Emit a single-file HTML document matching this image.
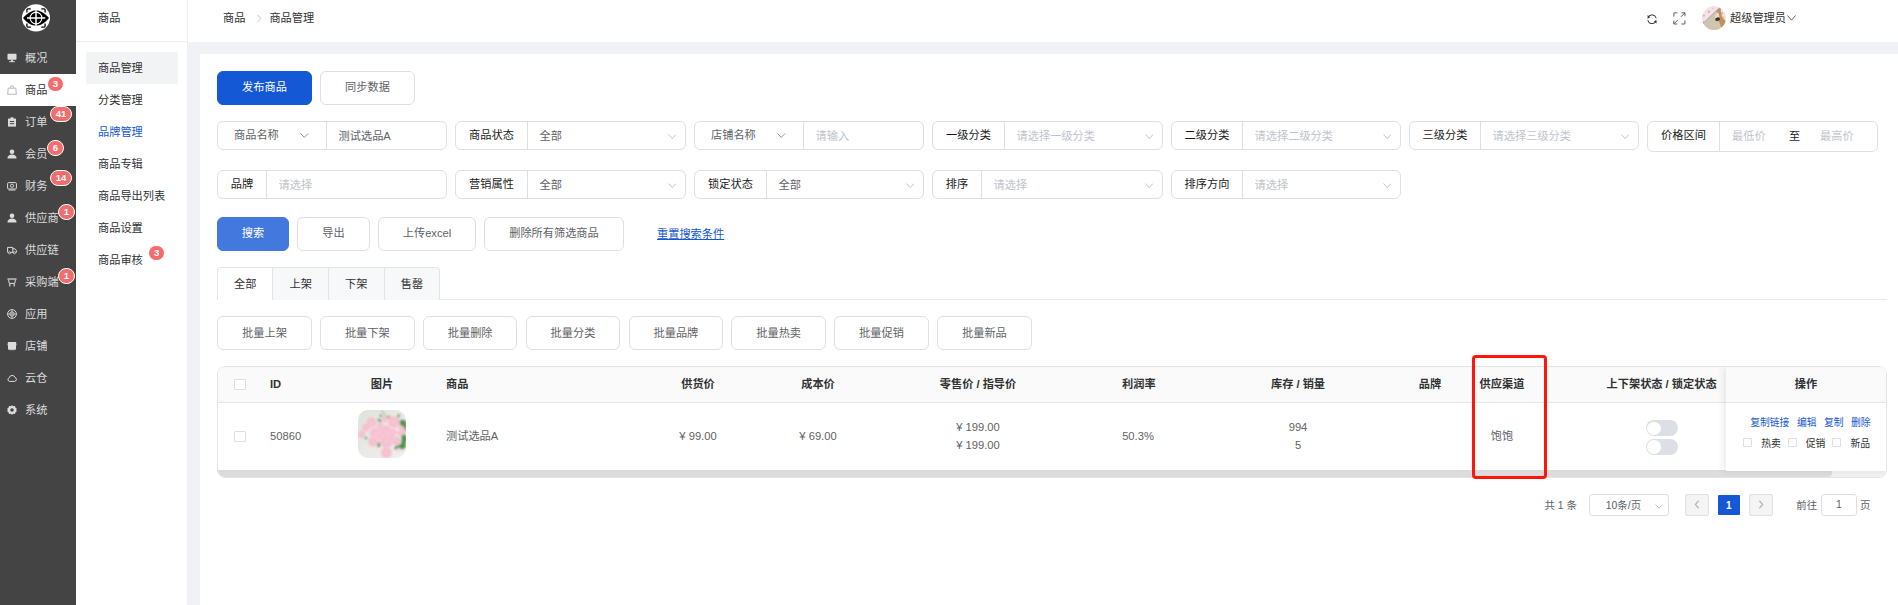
<!DOCTYPE html>
<html lang="zh-CN">
<head>
<meta charset="utf-8">
<title>商品管理</title>
<style>
*{box-sizing:border-box;margin:0;padding:0}
html,body{width:1898px;height:605px;overflow:hidden;background:#f0f2f5}
body{font-family:"Liberation Sans","Noto Sans CJK SC",sans-serif;font-size:11.2px;color:#303133;position:relative}
.abs{position:absolute}
#side1{position:absolute;left:0;top:0;width:76px;height:605px;background:#444444}
#side1 .mi{position:absolute;left:0;width:76px;height:32px;color:#dcdcdc;line-height:32px;padding-left:25px;white-space:nowrap}
#side1 .mi.act{background:#fff;color:#303133}
#side1 .mi.act svg{color:#b4b8c2}
#side1 .mi svg{position:absolute;left:7px;top:11px;width:10px;height:10px}
.badge{position:absolute;background:#f56c6c;color:#fff;border-radius:9px;height:16px;line-height:14px;font-size:9.6px;font-weight:bold;text-align:center;padding:0;border:1px solid #fff;font-family:"Liberation Sans",sans-serif}
#side2{position:absolute;left:76px;top:0;width:112px;height:605px;background:#fff;border-right:1px solid #ebeef2}
#side2 .hd{position:absolute;left:0;top:0;width:111px;height:42px;border-bottom:1px solid #ebeef2;line-height:36.6px;padding-left:22px;color:#303133}
#side2 .si{position:absolute;left:10px;width:92px;height:32px;line-height:33px;padding-left:12px;color:#303133;border-radius:2px;white-space:nowrap}
#side2 .si.act{background:#f2f3f5}
#side2 .si.blue{color:#1558d6}
#top{position:absolute;left:188px;top:0;width:1710px;height:42px;background:#fff}
#main{position:absolute;left:200px;top:54px;width:1698px;height:551px;background:#fff}
.btn{position:absolute;height:34px;line-height:30px;border:1px solid #dcdfe6;border-radius:6px;background:#fff;color:#606266;text-align:center;white-space:nowrap}
.btn.pri{background:#1558d6;border-color:#1558d6;color:#fff}
.btn.pri2{background:#4379de;border-color:#4379de;color:#fff}
.fg{position:absolute;height:29px;border:1px solid #dcdfe6;border-radius:6px;background:#fff;width:230px}
.fg .lab{position:absolute;left:0;top:0;height:27px;line-height:27px;text-align:center;color:#1a1a1a;border-right:1px solid #dcdfe6;white-space:nowrap}
.fg .val{position:absolute;top:0;height:27px;line-height:28.6px;color:#606266;white-space:nowrap}
.fg .ph{color:#c0c4cc}
#tbl{position:absolute;left:17px;top:312px;width:1670px;height:112px;border:1px solid #e3e4ea;border-radius:8px;overflow:hidden}
#tbl .th{position:absolute;left:0;top:0;width:1670px;height:36px;background:#fafafa;border-bottom:1px solid #e6e7ec}
.cb{position:absolute;width:11px;height:11px;border:1px solid #dcdfe6;border-radius:1px;background:#fff}
.cb.s{width:9px;height:9px;border-radius:1px}
.op{position:absolute;left:1508px;top:0;width:162px;height:104.3px;z-index:2;background:#fff;box-shadow:-3px 0 6px rgba(0,0,0,.08)}
.oph{position:absolute;left:0;top:0;width:160px;height:36px;background:#fafafa;border-bottom:1px solid #e6e7ec;text-align:center;line-height:34px;font-weight:bold;color:#303133}

</style>
</head>
<body>
<div id="side1">
<svg class="abs" style="left:22px;top:3.55px" width="28" height="28" viewBox="0 0 28 28">
<ellipse cx="14" cy="13.85" rx="14.1" ry="13.7" fill="#fff"/>
<path d="M1 14 C6 8.2,10 6.4,14 6.4 C18 6.4,22 8.2,27 14 C22 19.8,18 21.6,14 21.6 C10 21.6,6 19.8,1 14 Z" fill="#050505"/>
<circle cx="14" cy="14" r="5.9" fill="none" stroke="#fff" stroke-width="1.1"/>
<path d="M14 6.2 V21.8 M5 14 H23.2" stroke="#fff" stroke-width="1.5"/>
<path d="M4.9 8.4 V5.9 Q4.9 4.9 5.9 4.9 H8.8 M19.3 4.9 H22.1 Q23.1 4.9 23.1 5.9 V8.4 M4.9 19.6 V22.1 Q4.9 23.1 5.9 23.1 H8.8 M19.3 23.1 H22.1 Q23.1 23.1 23.1 22.1 V19.6" fill="none" stroke="#050505" stroke-width="1.3"/>
</svg>
<div class="mi" style="top:42px"><svg viewBox="0 0 10 10"><rect x="0.5" y="0.8" width="9" height="6" rx="0.8" fill="currentColor"/><rect x="4" y="6.8" width="2" height="1.6" fill="currentColor"/><rect x="2.2" y="8.2" width="5.6" height="1" fill="currentColor"/></svg>概况</div>
<div class="mi act" style="top:74px"><svg viewBox="0 0 10 10"><path d="M1.2 3.2 H8.8 L9.3 9.2 H0.7 Z" fill="none" stroke="currentColor" stroke-width="1"/><path d="M3.3 3.2 V2.4 a1.7 1.7 0 0 1 3.4 0 V3.2" fill="none" stroke="currentColor" stroke-width="1"/></svg>商品</div>
<div class="badge" style="left:47.0px;top:75.5px;width:17px;height:16.4px;line-height:14.399999999999999px">3</div>
<div class="mi" style="top:106px"><svg viewBox="0 0 10 10"><path d="M1 1.6 H9 V9.6 H1 Z" fill="currentColor"/><rect x="3.4" y="0.4" width="3.2" height="2" fill="currentColor"/><rect x="2.8" y="4" width="4.4" height="1" fill="#444"/><rect x="2.8" y="6.2" width="4.4" height="1" fill="#444"/></svg>订单</div>
<div class="badge" style="left:50.1px;top:106.0px;width:22px;height:16px;line-height:14px">41</div>
<div class="mi" style="top:138px"><svg viewBox="0 0 10 10"><circle cx="5" cy="2.8" r="2.3" fill="currentColor"/><path d="M0.4 9.6 C0.6 6.6 2.6 5.6 5 5.6 C7.4 5.6 9.4 6.6 9.6 9.6 Z" fill="currentColor"/></svg>会员</div>
<div class="badge" style="left:46.9px;top:139.5px;width:17px;height:16.4px;line-height:14.399999999999999px">6</div>
<div class="mi" style="top:170px"><svg viewBox="0 0 10 10"><rect x="0.6" y="1.6" width="8.8" height="6.4" rx="1" fill="none" stroke="currentColor" stroke-width="1"/><circle cx="5" cy="4.8" r="1.6" fill="none" stroke="currentColor" stroke-width="0.9"/><rect x="1.6" y="8.6" width="6.8" height="0.9" fill="currentColor"/></svg>财务</div>
<div class="badge" style="left:50.1px;top:170.0px;width:22px;height:16px;line-height:14px">14</div>
<div class="mi" style="top:202px"><svg viewBox="0 0 10 10"><circle cx="5" cy="2.8" r="2.3" fill="currentColor"/><path d="M0.4 9.6 C0.6 6.6 2.6 5.6 5 5.6 C7.4 5.6 9.4 6.6 9.6 9.6 Z" fill="currentColor"/></svg>供应商</div>
<div class="badge" style="left:57.8px;top:203.5px;width:17px;height:16.4px;line-height:14.399999999999999px">1</div>
<div class="mi" style="top:234px"><svg viewBox="0 0 10 10"><path d="M0.6 2.4 H5.8 V7.4 H0.6 Z M5.8 3.8 H8 L9.4 5.4 V7.4 H5.8" fill="none" stroke="currentColor" stroke-width="1"/><circle cx="2.6" cy="7.8" r="1.1" fill="#444" stroke="currentColor" stroke-width="0.8"/><circle cx="7.4" cy="7.8" r="1.1" fill="#444" stroke="currentColor" stroke-width="0.8"/></svg>供应链</div>
<div class="mi" style="top:266px"><svg viewBox="0 0 10 10"><path d="M0.4 1.4 H9.6 V2.6 H0.4 Z" fill="currentColor"/><path d="M1.6 2.6 L2.2 6.4 H7.8 L8.4 2.6" fill="none" stroke="currentColor" stroke-width="1"/><rect x="2.2" y="7" width="1.2" height="2.4" fill="currentColor"/><rect x="6.6" y="7" width="1.2" height="2.4" fill="currentColor"/></svg>采购端</div>
<div class="badge" style="left:57.8px;top:267.5px;width:17px;height:16.4px;line-height:14.399999999999999px">1</div>
<div class="mi" style="top:298px"><svg viewBox="0 0 10 10"><circle cx="5" cy="5" r="4.4" fill="none" stroke="currentColor" stroke-width="1"/><circle cx="5" cy="5" r="2.2" fill="none" stroke="currentColor" stroke-width="0.9"/><path d="M5 0.6 V9.4 M0.6 5 H9.4" stroke="currentColor" stroke-width="0.7"/></svg>应用</div>
<div class="mi" style="top:330px"><svg viewBox="0 0 10 10"><path d="M1 1 H9 L9.6 4.2 H0.4 Z" fill="currentColor"/><rect x="1" y="4" width="8" height="4.6" fill="currentColor"/><rect x="2.4" y="8.2" width="5.2" height="1" fill="currentColor" opacity="0.7"/></svg>店铺</div>
<div class="mi" style="top:362px"><svg viewBox="0 0 10 10"><path d="M2.6 8.4 H7.6 a2 2 0 0 0 0.4 -3.9 a3 3 0 0 0 -5.8 0.4 a1.8 1.8 0 0 0 0.4 3.5 Z" fill="none" stroke="currentColor" stroke-width="1"/></svg>云仓</div>
<div class="mi" style="top:394px"><svg viewBox="0 0 10 10"><path d="M5 0.2 L6.3 1.3 L8 1 L8.5 2.7 L9.9 3.7 L9.2 5 L9.9 6.3 L8.5 7.3 L8 9 L6.3 8.7 L5 9.8 L3.7 8.7 L2 9 L1.5 7.3 L0.1 6.3 L0.8 5 L0.1 3.7 L1.5 2.7 L2 1 L3.7 1.3 Z" fill="currentColor"/><circle cx="5" cy="5" r="1.8" fill="#444"/></svg>系统</div>
</div>
<div id="side2"><div class="hd">商品</div>
<div class="si act" style="top:52px">商品管理</div>
<div class="si " style="top:84px">分类管理</div>
<div class="si blue" style="top:116px">品牌管理</div>
<div class="si " style="top:148px">商品专辑</div>
<div class="si " style="top:180px">商品导出列表</div>
<div class="si " style="top:212px">商品设置</div>
<div class="si " style="top:244px">商品审核</div>
<div class="badge" style="left:72.2px;top:244.7px;width:17px;height:16.4px;line-height:14.4px">3</div>
</div>
<div id="top">
<div class="abs" style="left:35px;top:0;line-height:36.6px;color:#303133;white-space:nowrap">商品<span style="display:inline-block;width:24px"></span>商品管理</div>
<svg class="abs" style="left:67px;top:14px" width="8" height="9" viewBox="0 0 8 9"><path d="M2.5 1 L6 4.5 L2.5 8" fill="none" stroke="#c0c4cc" stroke-width="1"/></svg>
<svg class="abs" style="left:1458.9px;top:13.8px" width="10" height="10.4" viewBox="0 0 10 10.4"><path d="M0.9 4.5 A4.2 4.2 0 0 1 9.2 4.3" fill="none" stroke="#2b2f36" stroke-width="1"/><path d="M9.1 6.1 A4.2 4.2 0 0 1 0.8 6.3" fill="none" stroke="#2b2f36" stroke-width="1"/><path d="M0.6 1 L3.4 3.5 L0.6 3.7 Z" fill="#2b2f36"/><path d="M9.5 9.6 L6.7 7.1 L9.5 6.9 Z" fill="#2b2f36"/></svg>
<svg class="abs" style="left:1485.4px;top:12.2px" width="12.8" height="12.8" viewBox="0 0 12.8 12.8"><g fill="none" stroke="#5a5e66" stroke-width="1"><path d="M0.9 4.6 V0.9 H4.4"/><path d="M8.4 12 H11.9 V8.4"/><path d="M8 4.8 L11.9 0.9 M8.6 0.8 H12 V4.2"/><path d="M4.8 8 L0.9 11.9 M0.8 8.6 V12 H4.2"/></g></svg>
<svg class="abs" style="left:1514px;top:5.8px" width="24" height="24" viewBox="0 0 24 24"><defs><clipPath id="av"><circle cx="12" cy="12" r="12"/></clipPath><filter id="ab" x="-10%" y="-10%" width="120%" height="120%"><feGaussianBlur stdDeviation="0.45"/></filter></defs><g clip-path="url(#av)"><rect width="24" height="24" fill="#f3e5e5"/><g filter="url(#ab)"><circle cx="6.8" cy="5.7" r="1.3" fill="#f0a9ae"/><circle cx="1.9" cy="9.5" r="1.1" fill="#f0a9ae"/><circle cx="19.8" cy="7.4" r="1.3" fill="#f0a9ae"/><circle cx="1.4" cy="16" r="1" fill="#f0a9ae"/><circle cx="11" cy="2.4" r="0.9" fill="#f2b9bc"/><circle cx="22" cy="11.5" r="0.9" fill="#f2b9bc"/><path d="M0.4 18 L15.8 3.2 L18.4 1 L19.2 8.4 L21 12.5 L24.5 16 V25 H2 Z" fill="#cfc5ad"/><path d="M14.6 5 L18.3 1.2 L19.3 8.6 L21.2 12.6 L24.5 16 V22.5 L19.5 22 L17 15.5 Z" fill="#c0905c"/><path d="M12.8 10 L16.2 6 L17.6 11.8 L15 14.6 Z" fill="#eadfce"/><ellipse cx="15.6" cy="13.2" rx="2.4" ry="1.7" transform="rotate(-20 15.6 13.2)" fill="#3b3029"/><path d="M0.4 18 L16.6 2.4" stroke="#8d90a8" stroke-width="0.7" fill="none"/></g></g></svg>
<div class="abs" style="left:1542px;top:0;line-height:36px;color:#303133;white-space:nowrap">超级管理员</div>
<svg class="abs" style="left:1599px;top:15px" width="9" height="6" viewBox="0 0 9 6"><path d="M0.5 0.5 L4.5 5.2 L8.5 0.5" fill="none" stroke="#606266" stroke-width="1"/></svg>
</div>
<div id="main">
<div class="btn pri" style="left:17px;top:17px;width:95px;height:34px;line-height:30.6px">发布商品</div>
<div class="btn " style="left:120px;top:17px;width:95px;height:34px;line-height:30.6px">同步数据</div>
<div class="fg" style="left:17px;top:67px;width:230px"><div class="lab" style="width:109px;text-align:left;padding-left:16px;color:#606266">商品名称</div><svg class="abs" style="left:82px;top:10.8px" width="8.6" height="5.2" viewBox="0 0 8.6 5.2"><path d="M0.5 0.5 L4.3 4.4 L8.1 0.5" fill="none" stroke="#8f939a" stroke-width="1"/></svg><div class="val" style="left:120.6px">测试选品A</div></div>
<div class="fg" style="left:255px;top:67px;width:231px"><div class="lab" style="width:72px">商品状态</div><div class="val" style="left:83.6px">全部</div><svg class="abs" style="left:211.7px;top:12.4px" width="8.5" height="5.4" viewBox="0 0 8.5 5.4"><path d="M0.5 0.5 L4.25 4.6000000000000005 L8.0 0.5" fill="none" stroke="#c0c4cc" stroke-width="1"/></svg></div>
<div class="fg" style="left:494px;top:67px;width:230px"><div class="lab" style="width:109px;text-align:left;padding-left:16px;color:#606266">店铺名称</div><svg class="abs" style="left:82px;top:10.8px" width="8.6" height="5.2" viewBox="0 0 8.6 5.2"><path d="M0.5 0.5 L4.3 4.4 L8.1 0.5" fill="none" stroke="#8f939a" stroke-width="1"/></svg><div class="val ph" style="left:120.6px">请输入</div></div>
<div class="fg" style="left:732px;top:67px;width:231px"><div class="lab" style="width:72px">一级分类</div><div class="val ph" style="left:83.6px">请选择一级分类</div><svg class="abs" style="left:211.7px;top:12.4px" width="8.5" height="5.4" viewBox="0 0 8.5 5.4"><path d="M0.5 0.5 L4.25 4.6000000000000005 L8.0 0.5" fill="none" stroke="#c0c4cc" stroke-width="1"/></svg></div>
<div class="fg" style="left:971px;top:67px;width:230px"><div class="lab" style="width:71px">二级分类</div><div class="val ph" style="left:82.6px">请选择二级分类</div><svg class="abs" style="left:210.7px;top:12.4px" width="8.5" height="5.4" viewBox="0 0 8.5 5.4"><path d="M0.5 0.5 L4.25 4.6000000000000005 L8.0 0.5" fill="none" stroke="#c0c4cc" stroke-width="1"/></svg></div>
<div class="fg" style="left:1209px;top:67px;width:230px"><div class="lab" style="width:71px">三级分类</div><div class="val ph" style="left:82.6px">请选择三级分类</div><svg class="abs" style="left:210.7px;top:12.4px" width="8.5" height="5.4" viewBox="0 0 8.5 5.4"><path d="M0.5 0.5 L4.25 4.6000000000000005 L8.0 0.5" fill="none" stroke="#c0c4cc" stroke-width="1"/></svg></div>
<div class="fg" style="left:1447px;top:67px;height:30.5px;width:231px"><div class="lab" style="width:72px;height:28.5px">价格区间</div><div class="val ph" style="left:84px">最低价</div><div class="val" style="left:141px;color:#1a1a1a">至</div><div class="val ph" style="left:172px">最高价</div></div>
<div class="fg" style="left:17px;top:116px;width:230px"><div class="lab" style="width:49px">品牌</div><div class="val ph" style="left:60.6px">请选择</div></div>
<div class="fg" style="left:255px;top:116px;width:231px"><div class="lab" style="width:72px">营销属性</div><div class="val" style="left:83.6px">全部</div><svg class="abs" style="left:211.7px;top:12.4px" width="8.5" height="5.4" viewBox="0 0 8.5 5.4"><path d="M0.5 0.5 L4.25 4.6000000000000005 L8.0 0.5" fill="none" stroke="#c0c4cc" stroke-width="1"/></svg></div>
<div class="fg" style="left:494px;top:116px;width:230px"><div class="lab" style="width:72px">锁定状态</div><div class="val" style="left:83.6px">全部</div><svg class="abs" style="left:210.7px;top:12.4px" width="8.5" height="5.4" viewBox="0 0 8.5 5.4"><path d="M0.5 0.5 L4.25 4.6000000000000005 L8.0 0.5" fill="none" stroke="#c0c4cc" stroke-width="1"/></svg></div>
<div class="fg" style="left:732px;top:116px;width:231px"><div class="lab" style="width:49px">排序</div><div class="val ph" style="left:60.6px">请选择</div><svg class="abs" style="left:211.7px;top:12.4px" width="8.5" height="5.4" viewBox="0 0 8.5 5.4"><path d="M0.5 0.5 L4.25 4.6000000000000005 L8.0 0.5" fill="none" stroke="#c0c4cc" stroke-width="1"/></svg></div>
<div class="fg" style="left:971px;top:116px;width:230px"><div class="lab" style="width:71px">排序方向</div><div class="val ph" style="left:82.6px">请选择</div><svg class="abs" style="left:210.7px;top:12.4px" width="8.5" height="5.4" viewBox="0 0 8.5 5.4"><path d="M0.5 0.5 L4.25 4.6000000000000005 L8.0 0.5" fill="none" stroke="#c0c4cc" stroke-width="1"/></svg></div>
<div class="btn pri2" style="left:17px;top:163px;width:72px;height:34px;line-height:30.6px">搜索</div>
<div class="btn " style="left:97px;top:163px;width:73px;height:34px;line-height:30.6px">导出</div>
<div class="btn " style="left:178px;top:163px;width:98px;height:34px;line-height:30.6px">上传excel</div>
<div class="btn " style="left:284px;top:163px;width:140px;height:34px;line-height:30.6px">删除所有筛选商品</div>
<div class="abs" style="left:457px;top:163px;line-height:34px;color:#1558d6;text-decoration:underline;white-space:nowrap;text-underline-offset:0.5px;text-decoration-thickness:1px">重置搜索条件</div>
<div class="abs" style="left:240px;top:245px;width:1447px;height:1px;background:#e4e7ed"></div>
<div class="abs" style="left:17px;top:213px;width:223px;height:33px;border:1px solid #e1e4ea;border-bottom:none;border-radius:4px 4px 0 0;background:#f7f8fa;overflow:hidden">
<div class="abs" style="left:0;top:0;width:54.4px;height:33px;background:#fff"></div>
<div class="abs" style="left:54.4px;top:0;width:1px;height:33px;background:#e1e4ea"></div>
<div class="abs" style="left:110.3px;top:0;width:1px;height:33px;background:#e1e4ea"></div>
<div class="abs" style="left:165.5px;top:0;width:1px;height:33px;background:#e1e4ea"></div>
<div class="abs" style="left:-0.8px;top:0;width:55.2px;height:32px;line-height:33px;text-align:center;color:#303133;padding-left:0.8px">全部</div>
<div class="abs" style="left:54.4px;top:0;width:55.9px;height:32px;line-height:33px;text-align:center;color:#303133;padding-left:0.8px">上架</div>
<div class="abs" style="left:110.3px;top:0;width:55.2px;height:32px;line-height:33px;text-align:center;color:#303133;padding-left:0.8px">下架</div>
<div class="abs" style="left:165.5px;top:0;width:56.2px;height:32px;line-height:33px;text-align:center;color:#303133;padding-left:0.8px">售罄</div>
</div>
<div class="btn " style="left:17.19999999999999px;top:262px;width:94.6px;height:33.6px;line-height:32.4px">批量上架</div>
<div class="btn " style="left:120.0px;top:262px;width:94.6px;height:33.6px;line-height:32.4px">批量下架</div>
<div class="btn " style="left:222.89999999999998px;top:262px;width:94.6px;height:33.6px;line-height:32.4px">批量删除</div>
<div class="btn " style="left:325.70000000000005px;top:262px;width:94.6px;height:33.6px;line-height:32.4px">批量分类</div>
<div class="btn " style="left:428.6px;top:262px;width:94.6px;height:33.6px;line-height:32.4px">批量品牌</div>
<div class="btn " style="left:531.4px;top:262px;width:94.6px;height:33.6px;line-height:32.4px">批量热卖</div>
<div class="btn " style="left:634.2px;top:262px;width:94.6px;height:33.6px;line-height:32.4px">批量促销</div>
<div class="btn " style="left:737.1px;top:262px;width:94.6px;height:33.6px;line-height:32.4px">批量新品</div>
<div id="tbl">
<div class="th"></div>
<div class="cb" style="left:16px;top:12px;width:12px"></div>
<div class="abs" style="top:7px;line-height:20px;white-space:nowrap;left:52px;font-weight:bold;color:#303133;">ID</div>
<div class="abs" style="top:7px;line-height:20px;white-space:nowrap;left:64px;width:200px;text-align:center;font-weight:bold;color:#303133;">图片</div>
<div class="abs" style="top:7px;line-height:20px;white-space:nowrap;left:228px;font-weight:bold;color:#303133;">商品</div>
<div class="abs" style="top:7px;line-height:20px;white-space:nowrap;left:380px;width:200px;text-align:center;font-weight:bold;color:#303133;">供货价</div>
<div class="abs" style="top:7px;line-height:20px;white-space:nowrap;left:500px;width:200px;text-align:center;font-weight:bold;color:#303133;">成本价</div>
<div class="abs" style="top:7px;line-height:20px;white-space:nowrap;left:660px;width:200px;text-align:center;font-weight:bold;color:#303133;">零售价 / 指导价</div>
<div class="abs" style="top:7px;line-height:20px;white-space:nowrap;left:904px;font-weight:bold;color:#303133;">利润率</div>
<div class="abs" style="top:7px;line-height:20px;white-space:nowrap;left:980px;width:200px;text-align:center;font-weight:bold;color:#303133;">库存 / 销量</div>
<div class="abs" style="top:7px;line-height:20px;white-space:nowrap;left:1112px;width:200px;text-align:center;font-weight:bold;color:#303133;">品牌</div>
<div class="abs" style="top:7px;line-height:20px;white-space:nowrap;left:1184px;width:200px;text-align:center;font-weight:bold;color:#303133;">供应渠道</div>
<div class="abs" style="top:7px;line-height:20px;white-space:nowrap;left:1343.6px;width:200px;text-align:center;font-weight:bold;color:#303133;">上下架状态 / 锁定状态</div>
<div class="cb" style="left:16px;top:64px;width:12px"></div>
<div class="abs" style="top:59px;line-height:20px;white-space:nowrap;left:52px;color:#606266;">50860</div>
<div class="abs" style="top:59px;line-height:20px;white-space:nowrap;left:228px;color:#606266;">测试选品A</div>
<div class="abs" style="top:59px;line-height:20px;white-space:nowrap;left:380px;width:200px;text-align:center;color:#606266;">¥ 99.00</div>
<div class="abs" style="top:59px;line-height:20px;white-space:nowrap;left:500px;width:200px;text-align:center;color:#606266;">¥ 69.00</div>
<div class="abs" style="top:50px;line-height:20px;white-space:nowrap;left:660px;width:200px;text-align:center;color:#606266;">¥ 199.00</div>
<div class="abs" style="top:68px;line-height:20px;white-space:nowrap;left:660px;width:200px;text-align:center;color:#606266;">¥ 199.00</div>
<div class="abs" style="top:59px;line-height:20px;white-space:nowrap;left:820px;width:200px;text-align:center;color:#606266;">50.3%</div>
<div class="abs" style="top:50px;line-height:20px;white-space:nowrap;left:980px;width:200px;text-align:center;color:#606266;">994</div>
<div class="abs" style="top:68px;line-height:20px;white-space:nowrap;left:980px;width:200px;text-align:center;color:#606266;">5</div>
<div class="abs" style="top:59px;line-height:20px;white-space:nowrap;left:1184px;width:200px;text-align:center;color:#606266;">饱饱</div>
<svg class="abs" style="left:139.8px;top:43px" width="48" height="48" viewBox="0 0 48 48"><defs><clipPath id="im"><rect width="48" height="48" rx="10"/></clipPath><radialGradient id="fg"><stop offset="0" stop-color="#f8dcd8"/><stop offset="0.35" stop-color="#f5bccd"/><stop offset="0.75" stop-color="#f4c0d0"/><stop offset="1" stop-color="#f8dbe3" stop-opacity="0.85"/></radialGradient><linearGradient id="bgg" x1="0" y1="0" x2="1" y2="1"><stop offset="0" stop-color="#dde3da"/><stop offset="0.5" stop-color="#e8eae5"/><stop offset="1" stop-color="#f0efed"/></linearGradient><filter id="bl" x="-10%" y="-10%" width="120%" height="120%"><feGaussianBlur stdDeviation="0.8"/></filter></defs><g clip-path="url(#im)"><rect width="48" height="48" fill="url(#bgg)"/><g filter="url(#bl)"><path d="M23.5 0.5 L27 5 L31 8" fill="none" stroke="#6aa85e" stroke-width="0.9"/><ellipse cx="44.6" cy="12.9" rx="4" ry="3" transform="rotate(20 44.6 12.9)" fill="#4c9447"/><ellipse cx="46" cy="18" rx="3" ry="4" transform="rotate(0 46 18)" fill="#4c9447"/><ellipse cx="43.7" cy="36.5" rx="4.5" ry="3" transform="rotate(-30 43.7 36.5)" fill="#4c9447"/><ellipse cx="46" cy="30" rx="2.6" ry="4.5" transform="rotate(10 46 30)" fill="#4c9447"/><ellipse cx="29.8" cy="7.6" rx="2.8" ry="1.5" transform="rotate(-20 29.8 7.6)" fill="#4c9447"/><ellipse cx="20.8" cy="34.5" rx="1.6" ry="2.8" transform="rotate(10 20.8 34.5)" fill="#4c9447"/><ellipse cx="40.5" cy="6.2" rx="1.2" ry="2.2" transform="rotate(20 40.5 6.2)" fill="#4c9447"/><ellipse cx="21.5" cy="10.5" rx="2.4" ry="1.2" transform="rotate(30 21.5 10.5)" fill="#4c9447"/><ellipse cx="45" cy="25.5" rx="2.6" ry="2.2" transform="rotate(0 45 25.5)" fill="#4c9447"/><ellipse cx="8" cy="28" rx="1.6" ry="1" transform="rotate(0 8 28)" fill="#4c9447"/><ellipse cx="38.5" cy="37.5" rx="2.5" ry="1.6" transform="rotate(-40 38.5 37.5)" fill="#4c9447"/><ellipse cx="23" cy="6" rx="1.8" ry="0.9" transform="rotate(40 23 6)" fill="#4c9447"/><circle cx="13.4" cy="12.4" r="5.6" fill="url(#fg)"/><circle cx="35.7" cy="11.9" r="6.4" fill="url(#fg)"/><circle cx="7.9" cy="17.4" r="4.6" fill="url(#fg)"/><circle cx="3.5" cy="24.3" r="4.2" fill="url(#fg)"/><circle cx="17.4" cy="23.3" r="6.2" fill="url(#fg)"/><circle cx="27.3" cy="21.3" r="6.6" fill="url(#fg)"/><circle cx="14.9" cy="31.7" r="5.4" fill="url(#fg)"/><circle cx="28.3" cy="31.7" r="7" fill="url(#fg)"/><circle cx="38.2" cy="30.8" r="5" fill="url(#fg)"/><circle cx="42.2" cy="20.8" r="5.2" fill="url(#fg)"/><circle cx="28.3" cy="42.7" r="6" fill="url(#fg)"/><circle cx="26.8" cy="9" r="3.4" fill="url(#fg)"/><circle cx="34.5" cy="22.5" r="4.2" fill="url(#fg)"/><circle cx="22" cy="16" r="3.6" fill="url(#fg)"/><circle cx="21" cy="27" r="3.5" fill="url(#fg)"/><circle cx="33" cy="27" r="3.5" fill="url(#fg)"/><circle cx="40.7" cy="40.2" r="2.4" fill="#f6dde0"/><circle cx="17.4" cy="2.2" r="1.7" fill="#f3d9dc"/><circle cx="39.5" cy="19.5" r="1.8" fill="#f8e3e6"/></g></g></svg>
<div class="abs" style="left:1428.3px;top:53.4px;width:31.7px;height:16px;border-radius:8px;background:#dcdfe6"><div style="position:absolute;left:1.2px;top:1.2px;width:13.6px;height:13.6px;border-radius:50%;background:#fff"></div></div>
<div class="abs" style="left:1428.3px;top:72.0px;width:31.7px;height:16px;border-radius:8px;background:#dcdfe6"><div style="position:absolute;left:1.2px;top:1.2px;width:13.6px;height:13.6px;border-radius:50%;background:#fff"></div></div>
<div class="op"><div class="oph">操作</div>
<div class="abs" style="left:24.2px;top:48.2px;font-size:9.8px;color:#1558d6;white-space:nowrap;line-height:16px">复制链接</div>
<div class="abs" style="left:70.9px;top:48.2px;font-size:9.8px;color:#1558d6;white-space:nowrap;line-height:16px">编辑</div>
<div class="abs" style="left:98.0px;top:48.2px;font-size:9.8px;color:#1558d6;white-space:nowrap;line-height:16px">复制</div>
<div class="abs" style="left:125.0px;top:48.2px;font-size:9.8px;color:#1558d6;white-space:nowrap;line-height:16px">删除</div>
<div class="cb s" style="left:17.0px;top:70.5px"></div>
<div class="cb s" style="left:62.2px;top:70.5px"></div>
<div class="cb s" style="left:106.2px;top:70.5px"></div>
<div class="abs" style="left:35.2px;top:69.0px;font-size:9.8px;color:#303133;white-space:nowrap;line-height:16px">热卖</div>
<div class="abs" style="left:79.8px;top:69.0px;font-size:9.8px;color:#303133;white-space:nowrap;line-height:16px">促销</div>
<div class="abs" style="left:124.4px;top:69.0px;font-size:9.8px;color:#303133;white-space:nowrap;line-height:16px">新品</div>
</div>
<div class="abs" style="left:0;top:103px;width:1670px;height:7px;background:#f1f1f1;border-radius:0 0 6px 6px"></div>
<div class="abs" style="left:0;top:103px;width:1613.6px;height:7px;background:#dcdcdc;border-radius:0 0 4px 6px"></div>
</div>
<div class="abs" style="left:1272px;top:300.6px;width:75px;height:124px;border:3px solid #ff1509;border-radius:4px"></div>
<div class="abs" style="left:1344.6px;top:441.6px;line-height:20px;font-size:10.4px;white-space:nowrap;color:#606266">共 1 条</div>
<div class="abs" style="left:1389.0px;top:440.3px;width:80px;height:22.2px;border:1px solid #dcdfe6;border-radius:3px;line-height:21.4px;font-size:10.4px;white-space:nowrap;color:#606266;padding-left:15.8px">10条/页<svg class="abs" style="left:65px;top:9px" width="8" height="5" viewBox="0 0 8 5"><path d="M0.5 0.5 L4.0 4.2 L7.5 0.5" fill="none" stroke="#c0c4cc" stroke-width="1"/></svg></div>
<div class="abs" style="left:1485.0px;top:440.3px;width:24.2px;height:22.2px;background:#f4f4f5;border:1px solid #dedfe2;border-radius:2px"><svg class="abs" style="left:8px;top:5.2px" width="6" height="9" viewBox="0 0 6 9"><path d="M4.6 0.8 L1.4 4.5 L4.6 8.2" fill="none" stroke="#b4b7bd" stroke-width="1.3"/></svg></div>
<div class="abs" style="left:1517.7px;top:441.2px;width:22.4px;height:20.2px;background:#1558d6;border-radius:1px;color:#fff;font-weight:bold;text-align:center;line-height:22.6px;font-size:10px;white-space:nowrap">1</div>
<div class="abs" style="left:1549.0px;top:440.3px;width:24.2px;height:22.2px;background:#f4f4f5;border:1px solid #dedfe2;border-radius:2px"><svg class="abs" style="left:8.4px;top:5.2px" width="6" height="9" viewBox="0 0 6 9"><path d="M1.4 0.8 L4.6 4.5 L1.4 8.2" fill="none" stroke="#b4b7bd" stroke-width="1.3"/></svg></div>
<div class="abs" style="left:1596.3px;top:441.6px;line-height:20px;font-size:10.4px;white-space:nowrap;color:#606266">前往</div>
<div class="abs" style="left:1621.3px;top:440.2px;width:35.4px;height:22.2px;border:1px solid #dcdfe6;border-radius:3px;line-height:19.2px;font-size:10.4px;white-space:nowrap;color:#606266;text-align:center">1</div>
<div class="abs" style="left:1660.0px;top:441.6px;line-height:20px;font-size:10.4px;white-space:nowrap;color:#606266">页</div>
</div>
</body>
</html>
